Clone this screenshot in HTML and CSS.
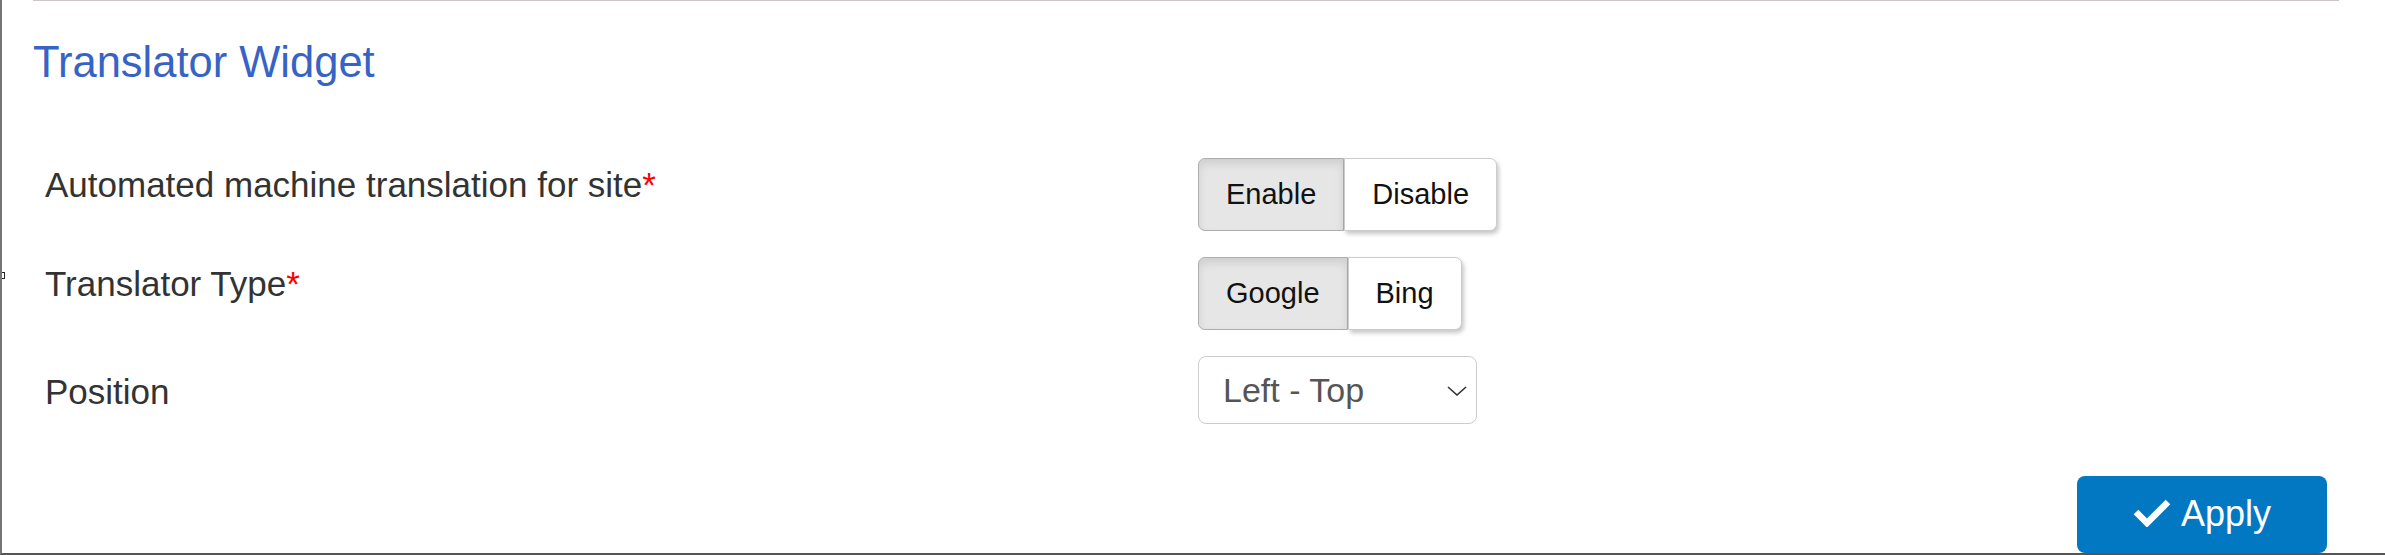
FILE: index.html
```html
<!DOCTYPE html>
<html lang="en">
<head>
    <meta charset="UTF-8">
    <meta name="viewport" content="width=device-width, initial-scale=1.0">
    <title>Translator Widget</title>
    <link rel="stylesheet" href="styles.css">
</head>
<body>

    <div class="frame">
        <span class="grip"></span>
        <div class="panel">
            <h1 class="title">Translator Widget</h1>

            <form class="settings" onsubmit="return false;">
                <div class="row">
                    <label class="label">Automated machine translation for site<span class="req">*</span></label>
                    <div class="btn-group">
                        <button type="button" class="seg active">Enable</button>
                        <button type="button" class="seg">Disable</button>
                    </div>
                </div>

                <div class="row">
                    <label class="label">Translator Type<span class="req">*</span></label>
                    <div class="btn-group">
                        <button type="button" class="seg active">Google</button>
                        <button type="button" class="seg">Bing</button>
                    </div>
                </div>

                <div class="row">
                    <label class="label label-select" for="position">Position</label>
                    <div class="select-wrap">
                        <select id="position" class="select">
                            <option>Left - Top</option>
                            <option>Left - Bottom</option>
                            <option>Right - Top</option>
                            <option>Right - Bottom</option>
                        </select>
                        <svg class="chevron" width="20" height="10" viewBox="0 0 20 10">
                            <polyline points="1,1 10,9 19,1" fill="none" stroke="#333" stroke-width="1.6"/>
                        </svg>
                    </div>
                </div>

                <div class="actions">
                    <button type="submit" class="apply">
                        <svg class="check" width="38" height="28" viewBox="0 0 38 28">
                            <polyline points="3,13 14,24 35,3" fill="none" stroke="#fff" stroke-width="6.5"/>
                        </svg>
                        Apply
                    </button>
                </div>
            </form>
        </div>
    </div>

    <script>
        document.querySelectorAll(".btn-group").forEach(group => {
            group.querySelectorAll(".seg").forEach(btn => {
                btn.addEventListener("click", () => {
                    group.querySelectorAll(".seg").forEach(b => b.classList.remove("active"));
                    btn.classList.add("active");
                });
            });
        });
    </script>
</body>
</html>
```

FILE: styles.css
```css
body {
    margin: 0;
    font-family: "Liberation Sans", Arial, sans-serif;
    background-color: white;
    color: #333;
}

.frame {
    position: relative;
    height: 555px;
    box-sizing: border-box;
    border-left: 2px solid #767676;
    border-bottom: 2px solid #555;
    overflow: hidden;
}

.grip {
    position: absolute;
    left: -2px;
    top: 272px;
    width: 3px;
    height: 5px;
    border: 1px solid #222;
    background-color: white;
}

.panel {
    margin: 0 46px 0 31px;
    border-top: 1px solid #cdc6c6;
}

.title {
    margin: 36px 0 0;
    font-size: 43.5px;
    line-height: 50px;
    font-weight: normal;
    color: #3763c5;
}

.settings {
    margin-top: 71px;
}

.row {
    display: flex;
    align-items: flex-start;
    padding-left: 12px;
    margin-bottom: 26px;
}

.label {
    width: 1153px;
    flex-shrink: 0;
    padding-top: 7px;
    font-size: 35px;
    line-height: 40px;
    color: #333;
}

.label-select {
    padding-top: 16px;
}

.req {
    color: #f00;
}

.btn-group {
    display: flex;
}

.seg {
    height: 73px;
    padding: 0 27px;
    font-family: "Liberation Sans", Arial, sans-serif;
    font-size: 29px;
    color: #111;
    background-color: white;
    border: 1px solid #ccc;
    border-radius: 0 7px 7px 0;
    box-shadow: 2px 3px 4px rgba(0, 0, 0, 0.22);
    cursor: pointer;
}

.seg.active {
    background-color: #e6e6e6;
    border-color: #adadad;
    border-radius: 7px 0 0 7px;
    box-shadow: inset 0 5px 9px rgba(0, 0, 0, 0.1);
}

.select-wrap {
    position: relative;
    display: flex;
}

.select {
    width: 279px;
    height: 68px;
    padding: 0 24px;
    font-family: "Liberation Sans", Arial, sans-serif;
    font-size: 34px;
    color: #555;
    background-color: white;
    border: 1px solid #ccc;
    border-radius: 8px;
    appearance: none;
    -webkit-appearance: none;
}

.chevron {
    position: absolute;
    right: 10px;
    top: 30px;
    pointer-events: none;
}

.actions {
    display: flex;
    justify-content: flex-end;
    padding: 26px 12px 0 0;
}

.apply {
    display: flex;
    align-items: center;
    justify-content: center;
    gap: 10px;
    width: 250px;
    height: 77px;
    padding: 0 0 1px;
    font-family: "Liberation Sans", Arial, sans-serif;
    font-size: 36px;
    color: white;
    background-color: #0277c2;
    border: none;
    border-radius: 8px;
    cursor: pointer;
}

.check {
    margin-top: -2px;
}
```
